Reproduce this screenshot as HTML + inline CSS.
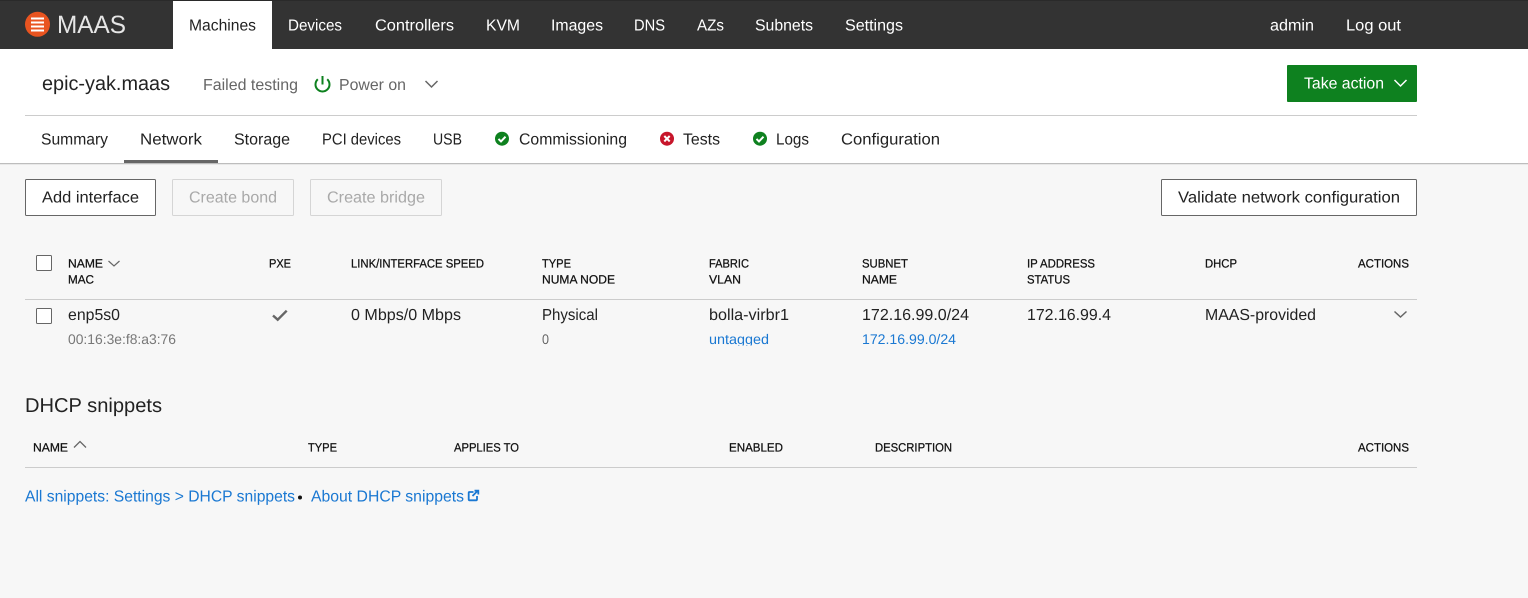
<!DOCTYPE html>
<html lang="en"><head><meta charset="utf-8"><title>epic-yak.maas</title>
<style>
html,body{margin:0;padding:0;background:#f7f7f7;overflow:hidden}
svg{display:block}
text{font-family:"Liberation Sans",sans-serif;font-size:16px;fill:#111;text-rendering:geometricPrecision}
.n{fill:#fff}
.t{fill:#222}
.g{fill:#666}
.l{fill:#1a78d2}
.d{fill:#a9a9a9}
.h{font-size:12px;fill:#111;stroke:#111;stroke-width:.25px}
.s{font-size:14px}
.c{fill:none;stroke:#666;stroke-width:1.5}
</style></head><body>
<svg xmlns="http://www.w3.org/2000/svg" width="1528" height="598" viewBox="0 0 1528 598">
<rect width="1528" height="598" fill="#f7f7f7"/>
<rect width="1528" height="163" fill="#fff"/>
<rect y="163" width="1528" height="1" fill="#bdbdbd"/>
<rect y="164" width="1528" height="1" fill="#e8e8e8"/>
<rect width="1528" height="49" fill="#333"/>
<rect width="1528" height="1" fill="#2a2a2a"/>
<rect x="173" y="1" width="99" height="48" fill="#fff"/>

<circle cx="37.500" cy="24.300" r="12.500" fill="#e95420"/>
<path d="M31 18.500h13M31 22.500h13M31 26.500h13M31 30.500h13" stroke="#fff" stroke-width="2" fill="none"/>
<text class="n" x="57" y="33" style="font-size:25px;fill-opacity:.88" textLength="69" lengthAdjust="spacingAndGlyphs">MAAS</text>
<text class="t" x="189" y="30.500" textLength="67" lengthAdjust="spacingAndGlyphs">Machines</text>
<text class="n" x="288" y="30.500" textLength="54" lengthAdjust="spacingAndGlyphs">Devices</text>
<text class="n" x="375" y="30.500" textLength="79" lengthAdjust="spacingAndGlyphs">Controllers</text>
<text class="n" x="486" y="30.500" textLength="34" lengthAdjust="spacingAndGlyphs">KVM</text>
<text class="n" x="551" y="30.500" textLength="52" lengthAdjust="spacingAndGlyphs">Images</text>
<text class="n" x="634" y="30.500" textLength="31" lengthAdjust="spacingAndGlyphs">DNS</text>
<text class="n" x="697" y="30.500" textLength="27" lengthAdjust="spacingAndGlyphs">AZs</text>
<text class="n" x="755" y="30.500" textLength="58" lengthAdjust="spacingAndGlyphs">Subnets</text>
<text class="n" x="845" y="30.500" textLength="58" lengthAdjust="spacingAndGlyphs">Settings</text>
<text class="n" x="1270" y="30.500" textLength="44" lengthAdjust="spacingAndGlyphs">admin</text>
<text class="n" x="1346" y="30.500" textLength="55" lengthAdjust="spacingAndGlyphs">Log out</text>

<text class="t" x="42" y="90" style="font-size:20px" textLength="128" lengthAdjust="spacingAndGlyphs">epic-yak.maas</text>
<text class="g" x="203" y="90" textLength="95" lengthAdjust="spacingAndGlyphs">Failed testing</text>
<path d="M322.500 76v8.500M317.800 79.300a7 7 0 1 0 9.400 0" fill="none" stroke="#0e811f" stroke-width="2"/>
<text class="g" x="339" y="90" textLength="67" lengthAdjust="spacingAndGlyphs">Power on</text>
<path d="M425.500 81l6 6 6-6" class="c"/>
<rect x="1287" y="65" width="130" height="37" rx="1" fill="#0e811f"/>
<text class="n" x="1304" y="88.500" textLength="80" lengthAdjust="spacingAndGlyphs">Take action</text>
<path d="M1394.500 80l6 6 6-6" fill="none" stroke="#fff" stroke-width="1.500"/>
<rect x="25" y="115" width="1392" height="1" fill="#ccc"/>

<text class="t" x="41" y="144.500" textLength="67" lengthAdjust="spacingAndGlyphs">Summary</text>
<text class="t" x="140" y="144.500" textLength="62" lengthAdjust="spacingAndGlyphs">Network</text>
<rect x="124" y="160" width="94" height="3" fill="#666"/>
<text class="t" x="234" y="144.500" textLength="56" lengthAdjust="spacingAndGlyphs">Storage</text>
<text class="t" x="322" y="144.500" textLength="79" lengthAdjust="spacingAndGlyphs">PCI devices</text>
<text class="t" x="433" y="144.500" textLength="29" lengthAdjust="spacingAndGlyphs">USB</text>
<circle cx="502" cy="138.700" r="7" fill="#0e811f"/>
<path d="M498.500 138.900l2.500 2.500 4.500-4.700" fill="none" stroke="#fff" stroke-width="2"/>
<text class="t" x="519" y="144.500" textLength="108" lengthAdjust="spacingAndGlyphs">Commissioning</text>
<circle cx="667" cy="138.700" r="7" fill="#c7162b"/>
<path d="M664.300 136l5.400 5.400M669.700 136l-5.400 5.400" fill="none" stroke="#fff" stroke-width="2"/>
<text class="t" x="683" y="144.500" textLength="37" lengthAdjust="spacingAndGlyphs">Tests</text>
<circle cx="760" cy="138.700" r="7" fill="#0e811f"/>
<path d="M756.500 138.900l2.500 2.500 4.500-4.700" fill="none" stroke="#fff" stroke-width="2"/>
<text class="t" x="776" y="144.500" textLength="33" lengthAdjust="spacingAndGlyphs">Logs</text>
<text class="t" x="841" y="144.500" textLength="99" lengthAdjust="spacingAndGlyphs">Configuration</text>

<rect x="25.500" y="179.500" width="130" height="36" rx="1" fill="#fff" stroke="#666"/>
<text class="t" x="42" y="202.500" textLength="97" lengthAdjust="spacingAndGlyphs">Add interface</text>
<rect x="172.500" y="179.500" width="121" height="36" rx="1" fill="none" stroke="#d5d5d5"/>
<text class="d" x="189" y="202.500" textLength="88" lengthAdjust="spacingAndGlyphs">Create bond</text>
<rect x="310.500" y="179.500" width="131" height="36" rx="1" fill="none" stroke="#d5d5d5"/>
<text class="d" x="327" y="202.500" textLength="98" lengthAdjust="spacingAndGlyphs">Create bridge</text>
<rect x="1161.500" y="179.500" width="255" height="36" rx="1" fill="#fff" stroke="#666"/>
<text class="t" x="1178" y="202.500" textLength="222" lengthAdjust="spacingAndGlyphs">Validate network configuration</text>

<rect x="36.500" y="255.500" width="15" height="15" rx="1" fill="#fff" stroke="#666"/>
<text class="h" x="68" y="267.500" textLength="35" lengthAdjust="spacingAndGlyphs">NAME</text>
<path d="M108.500 261l5.500 5 5.500-5" fill="none" stroke="#666" stroke-width="1.200"/>
<text class="h" x="68" y="283.500" textLength="26" lengthAdjust="spacingAndGlyphs">MAC</text>
<text class="h" x="269" y="267.500" textLength="22" lengthAdjust="spacingAndGlyphs">PXE</text>
<text class="h" x="351" y="267.500" textLength="133" lengthAdjust="spacingAndGlyphs">LINK/INTERFACE SPEED</text>
<text class="h" x="542" y="267.500" textLength="29" lengthAdjust="spacingAndGlyphs">TYPE</text>
<text class="h" x="542" y="283.500" textLength="73" lengthAdjust="spacingAndGlyphs">NUMA NODE</text>
<text class="h" x="709" y="267.500" textLength="40" lengthAdjust="spacingAndGlyphs">FABRIC</text>
<text class="h" x="709" y="283.500" textLength="32" lengthAdjust="spacingAndGlyphs">VLAN</text>
<text class="h" x="862" y="267.500" textLength="46" lengthAdjust="spacingAndGlyphs">SUBNET</text>
<text class="h" x="862" y="283.500" textLength="35" lengthAdjust="spacingAndGlyphs">NAME</text>
<text class="h" x="1027" y="267.500" textLength="68" lengthAdjust="spacingAndGlyphs">IP ADDRESS</text>
<text class="h" x="1027" y="283.500" textLength="43" lengthAdjust="spacingAndGlyphs">STATUS</text>
<text class="h" x="1205" y="267.500" textLength="32" lengthAdjust="spacingAndGlyphs">DHCP</text>
<text class="h" x="1358" y="267.500" textLength="51" lengthAdjust="spacingAndGlyphs">ACTIONS</text>
<rect x="25" y="299" width="1392" height="1" fill="#ccc"/>

<rect x="36.500" y="308.500" width="15" height="15" rx="1" fill="#fff" stroke="#666"/>
<text class="t" x="68" y="320" textLength="52" lengthAdjust="spacingAndGlyphs">enp5s0</text>
<text class="g s" x="68" y="344" style="fill:#777" textLength="108" lengthAdjust="spacingAndGlyphs">00:16:3e:f8:a3:76</text>
<path d="M273 315.500l4.700 4.200 9-9" fill="none" stroke="#666" stroke-width="2.400"/>
<text class="t" x="351" y="320" textLength="110" lengthAdjust="spacingAndGlyphs">0 Mbps/0 Mbps</text>
<text class="t" x="542" y="320" textLength="56" lengthAdjust="spacingAndGlyphs">Physical</text>
<text class="g s" x="542" y="344" textLength="7" lengthAdjust="spacingAndGlyphs">0</text>
<text class="t" x="709" y="320" textLength="80" lengthAdjust="spacingAndGlyphs">bolla-virbr1</text>
<text class="l s" x="709" y="344" textLength="60" lengthAdjust="spacingAndGlyphs">untagged</text>
<rect x="705" y="345.500" width="70" height="5" fill="#f7f7f7"/>
<text class="t" x="862" y="320" textLength="107" lengthAdjust="spacingAndGlyphs">172.16.99.0/24</text>
<text class="l s" x="862" y="344" textLength="94" lengthAdjust="spacingAndGlyphs">172.16.99.0/24</text>
<text class="t" x="1027" y="320" textLength="84" lengthAdjust="spacingAndGlyphs">172.16.99.4</text>
<text class="t" x="1205" y="320" textLength="111" lengthAdjust="spacingAndGlyphs">MAAS-provided</text>
<path d="M1394.500 311.500l6 5.500 6-5.500" class="c"/>

<text class="t" x="25" y="412" style="font-size:20px" textLength="137" lengthAdjust="spacingAndGlyphs">DHCP snippets</text>
<text class="h" x="33" y="451.500" textLength="35" lengthAdjust="spacingAndGlyphs">NAME</text>
<path d="M74 447.500l6-6 6 6" fill="none" stroke="#666" stroke-width="1.300"/>
<text class="h" x="308" y="451.500" textLength="29" lengthAdjust="spacingAndGlyphs">TYPE</text>
<text class="h" x="454" y="451.500" textLength="65" lengthAdjust="spacingAndGlyphs">APPLIES TO</text>
<text class="h" x="729" y="451.500" textLength="54" lengthAdjust="spacingAndGlyphs">ENABLED</text>
<text class="h" x="875" y="451.500" textLength="77" lengthAdjust="spacingAndGlyphs">DESCRIPTION</text>
<text class="h" x="1358" y="451.500" textLength="51" lengthAdjust="spacingAndGlyphs">ACTIONS</text>
<rect x="25" y="467" width="1392" height="1" fill="#ccc"/>

<text class="l" x="25" y="501.500" textLength="270" lengthAdjust="spacingAndGlyphs">All snippets: Settings &gt; DHCP snippets</text>
<circle cx="300" cy="497.500" r="2" fill="#111"/>
<text class="l" x="311" y="501.500" textLength="153" lengthAdjust="spacingAndGlyphs">About DHCP snippets</text>
<path d="M473.500 492h-4a.8.8 0 0 0-.8.8v6.700a.8.8 0 0 0 .8.8h6.700a.8.8 0 0 0 .8-.8v-3.500M472.500 496l5-5M474.500 490.700h3.800v3.800" fill="none" stroke="#1a78d2" stroke-width="1.800"/>
</svg>
</body></html>
